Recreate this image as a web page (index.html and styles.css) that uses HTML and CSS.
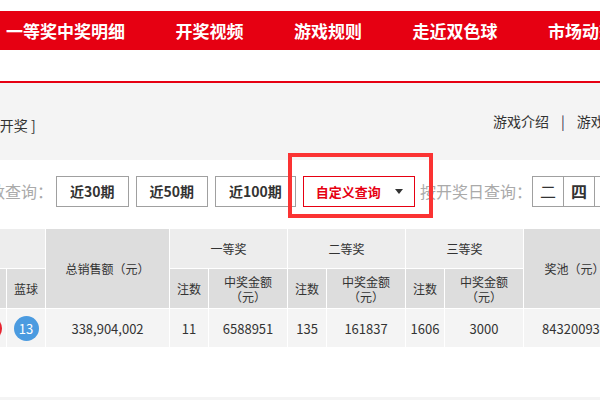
FILE: index.html
```html
<!DOCTYPE html>
<html lang="zh-CN">
<head>
<meta charset="utf-8">
<title>双色球开奖</title>
<link rel="stylesheet" href="styles.css">
</head>
<body>
<nav class="nav">
  <a href="#">一等奖中奖明细</a>
  <a href="#">开奖视频</a>
  <a href="#">游戏规则</a>
  <a href="#">走近双色球</a>
  <a href="#">市场动态</a>
</nav>
<div class="subhead"></div>
<section class="info">
  <div class="info-left">[ 每周二、四、日开奖 ]</div>
  <div class="info-links"><a href="#">游戏介绍</a><span class="sep">|</span><a href="#">游戏规则</a></div>
</section>
<section class="query">
  <span class="q-label">按期数查询：</span>
  <span class="btn first">近30期</span>
  <span class="btn">近50期</span>
  <span class="btn">近100期</span>
  <span class="dropdown">自定义查询<span class="caret"></span></span>
  <span class="q-label q-label2">按开奖日查询：</span>
  <div class="days"><span>二</span><span class="on">四</span><span>日</span></div>
</section>
<table class="result">
  <colgroup>
    <col class="c-red"><col class="c-blue"><col class="c-total">
    <col class="c-n"><col class="c-m"><col class="c-n"><col class="c-m"><col class="c-n"><col class="c-m">
    <col class="c-pool">
  </colgroup>
  <thead>
    <tr class="r1">
      <th colspan="2" class="lt">开奖号码</th>
      <th rowspan="2" class="dk">总销售额（元）</th>
      <th colspan="2" class="lt">一等奖</th>
      <th colspan="2" class="lt">二等奖</th>
      <th colspan="2" class="lt">三等奖</th>
      <th rowspan="2" class="dk">奖池（元）</th>
    </tr>
    <tr class="r2">
      <th class="dk">红球</th>
      <th class="dk">蓝球</th>
      <th class="dk">注数</th><th class="dk">中奖金额<br>（元）</th>
      <th class="dk">注数</th><th class="dk">中奖金额<br>（元）</th>
      <th class="dk">注数</th><th class="dk">中奖金额<br>（元）</th>
    </tr>
  </thead>
  <tbody>
    <tr>
      <td><div class="reds"><span class="ball red">03</span><span class="ball red">08</span><span class="ball red">14</span><span class="ball red">20</span><span class="ball red">27</span><span class="ball red">31</span></div></td>
      <td><span class="ball blue">13</span></td>
      <td>338,904,002</td>
      <td>11</td><td>6588951</td>
      <td>135</td><td>161837</td>
      <td>1606</td><td>3000</td>
      <td>843200936</td>
    </tr>
  </tbody>
</table>
<div class="strip"></div>
<div class="annot"></div>
</body>
</html>
```
FILE: styles.css
```css
html, body {
  margin: 0;
  padding: 0;
}
body {
  width: 600px;
  height: 400px;
  overflow: hidden;
  position: relative;
  background: #fff;
  color: #333;
  font-family: "Noto Sans CJK SC", "Microsoft YaHei", sans-serif;
}
.nav {
  margin-top: 11px;
  height: 39px;
  background: #e60012;
  display: flex;
  align-items: center;
  gap: 50.5px;
  padding-left: 6px;
  white-space: nowrap;
}
.nav a {
  color: #fff;
  font-size: 17px;
  font-weight: bold;
  text-decoration: none;
  line-height: 39px;
  flex-shrink: 0;
}
.subhead {
  height: 31px;
  border-bottom: 2px solid #e60012;
}
.info {
  height: 77px;
  background: #f4f4f4;
  display: flex;
  white-space: nowrap;
  font-size: 14px;
  line-height: 20px;
}
.info-left {
  margin-left: -106px;
  padding-top: 32px;
  flex-shrink: 0;
}
.info-links {
  margin-left: auto;
  width: 107px;
  padding-top: 28px;
  flex-shrink: 0;
}
.info-links a {
  color: #333;
  text-decoration: none;
}
.sep {
  padding: 0 12px;
  color: #3a2a4a;
}
.query {
  height: 68px;
  box-sizing: border-box;
  padding-top: 16px;
  display: flex;
  align-items: flex-start;
  white-space: nowrap;
}
.q-label {
  font-size: 16px;
  color: #aaa;
  line-height: 31px;
  margin-left: -43px;
  margin-right: 3px;
  flex-shrink: 0;
}
.q-label2 {
  margin-left: 5px;
  margin-right: 0;
}
.btn {
  height: 31px;
  box-sizing: border-box;
  border: 1px solid #a0a0a0;
  padding: 0 13px;
  font-size: 14px;
  font-weight: bold;
  line-height: 29px;
  margin-left: 7px;
  color: #333;
  flex-shrink: 0;
}
.btn.first {
  margin-left: 0;
}
.dropdown {
  margin-left: 7px;
  height: 31px;
  box-sizing: border-box;
  border: 1px solid #e60012;
  color: #e60012;
  font-size: 13px;
  font-weight: bold;
  padding: 0 11px 0 12px;
  display: flex;
  align-items: center;
  flex-shrink: 0;
}
.caret {
  width: 0;
  height: 0;
  border-left: 4.5px solid transparent;
  border-right: 4.5px solid transparent;
  border-top: 5px solid #333;
  margin-left: 14px;
}
.days {
  display: flex;
  flex-shrink: 0;
}
.days span {
  width: 32px;
  height: 31px;
  box-sizing: border-box;
  border: 1px solid #a0a0a0;
  margin-left: -1px;
  text-align: center;
  line-height: 29px;
  font-size: 16px;
  color: #333;
}
.days span:first-child {
  margin-left: 0;
}
.days span.on {
  font-weight: bold;
}
.result {
  border-collapse: separate;
  border-spacing: 1px;
  table-layout: fixed;
  width: 786px;
  margin-left: -160px;
  background: #fff;
}
.c-red { width: 165px; }
.c-blue { width: 38px; }
.c-total { width: 123px; }
.c-n { width: 38px; }
.c-m { width: 78px; }
.c-pool { width: 101px; }
.result th {
  padding: 0;
  height: 39px;
  font-size: 12px;
  font-weight: normal;
  line-height: 15px;
  color: #333;
  text-align: center;
}
.result th.lt {
  background: #ededed;
}
.result th.dk {
  background: #dddddd;
}
.result td {
  padding: 0;
  height: 38px;
  background: #f4f4f4;
  text-align: center;
  font-size: 13px;
  color: #333;
}
.reds {
  display: flex;
  justify-content: flex-end;
  gap: 2px;
  padding-right: 4px;
}
.ball {
  display: inline-block;
  width: 25px;
  height: 25px;
  border-radius: 50%;
  color: #fff;
  font-size: 13px;
  line-height: 25px;
  text-align: center;
  vertical-align: middle;
}
.ball.red {
  background: #e8232f;
}
.ball.blue {
  background: #4b9be0;
}
.strip {
  margin-top: 49px;
  height: 5px;
  background: #f4f4f4;
}
.annot {
  position: absolute;
  left: 288px;
  top: 153px;
  width: 145px;
  height: 65px;
  box-sizing: border-box;
  border: 4px solid #fb3333;
}
```
